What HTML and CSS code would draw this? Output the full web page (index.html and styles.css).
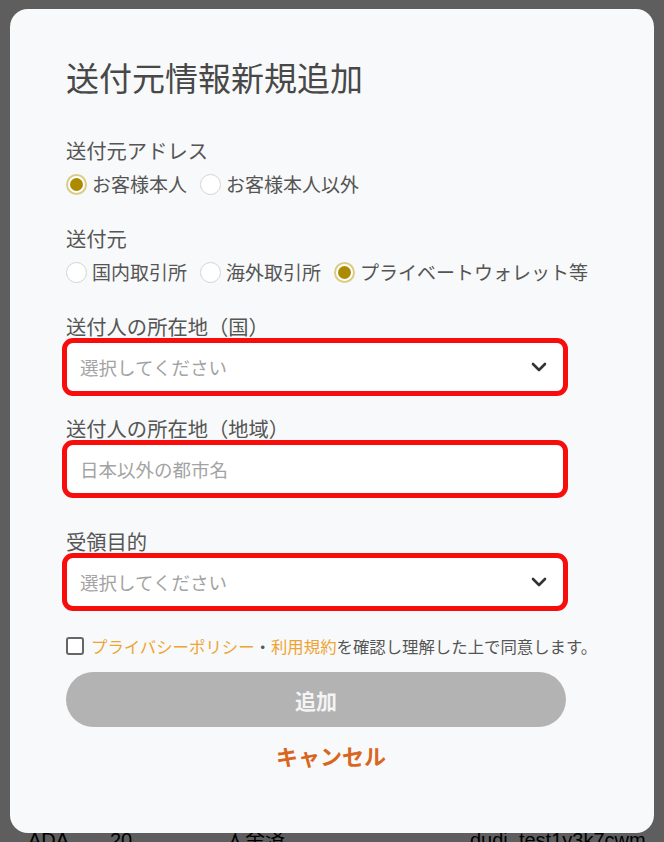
FILE: index.html
```html
<!DOCTYPE html>
<html lang="ja">
<head>
<meta charset="utf-8">
<title>送付元情報新規追加</title>
<link rel="stylesheet" href="styles.css">
</head>
<body>
<div class="page">
  <div class="bg-row">
    <span class="c1">ADA</span><span class="c2">20</span><span class="c3">入金済</span><span class="c4">dudi_test1y3k7cwm</span>
  </div>
</div>
<div class="overlay">
  <div class="modal">
    <h1 class="title">送付元情報新規追加</h1>

    <div class="label first">送付元アドレス</div>
    <div class="radios">
      <label class="radio"><span class="dot on"></span>お客様本人</label>
      <label class="radio"><span class="dot"></span>お客様本人以外</label>
    </div>

    <div class="label gap-l">送付元</div>
    <div class="radios">
      <label class="radio"><span class="dot"></span>国内取引所</label>
      <label class="radio"><span class="dot"></span>海外取引所</label>
      <label class="radio"><span class="dot on"></span>プライベートウォレット等</label>
    </div>

    <div class="label gap-l">送付人の所在地（国）</div>
    <div class="box">
      <span class="ph">選択してください</span>
      <svg class="chev" width="16" height="10" viewBox="0 0 16 10"><path d="M2 2 L8 8 L14 2" fill="none" stroke="#333" stroke-width="2.6" stroke-linecap="round" stroke-linejoin="round"/></svg>
    </div>

    <div class="label gap-m">送付人の所在地（地域）</div>
    <div class="box">
      <span class="ph">日本以外の都市名</span>
    </div>

    <div class="label gap-xl">受領目的</div>
    <div class="box">
      <span class="ph">選択してください</span>
      <svg class="chev" width="16" height="10" viewBox="0 0 16 10"><path d="M2 2 L8 8 L14 2" fill="none" stroke="#333" stroke-width="2.6" stroke-linecap="round" stroke-linejoin="round"/></svg>
    </div>

    <div class="agree">
      <span class="check"></span>
      <span><span class="link">プライバシーポリシー</span>・<span class="link">利用規約</span>を確認し理解した上で同意します。</span>
    </div>

    <div class="btn">追加</div>
    <div class="cancel">キャンセル</div>
  </div>
</div>
</body>
</html>
```
FILE: styles.css
```css
* { box-sizing: border-box; }
html, body { margin: 0; padding: 0; }
body {
  width: 664px;
  height: 842px;
  overflow: hidden;
  background: #ffffff;
  font-family: "Noto Sans CJK JP", "Noto Sans", sans-serif;
  position: relative;
}
.page {
  height: 842px;
  display: flex;
  flex-direction: column;
  justify-content: flex-end;
}
.bg-row {
  display: flex;
  font-family: "Liberation Sans", "Noto Sans CJK JP", sans-serif;
  font-size: 20px;
  line-height: 20px;
  color: #000;
  height: 12px;
  overflow: visible;
  padding-left: 28px;
}
.bg-row .c1 { width: 82px; }
.bg-row .c2 { width: 115px; }
.bg-row .c3 { width: 245px; }
.overlay {
  position: absolute;
  inset: 0;
  background: rgba(0, 0, 0, 0.63);
  padding: 9px 10px 9px 10px;
}
.modal {
  width: 644px;
  height: 824px;
  background: #f8f9fa;
  border-radius: 18px;
  padding: 48px 0 0 56px;
  display: flex;
  flex-direction: column;
  align-items: flex-start;
  color: #555;
}
.title {
  margin: 0;
  font-size: 33px;
  line-height: 40px;
  font-weight: 400;
  color: #484848;
}
.label {
  font-size: 20.3px;
  line-height: 24px;
  color: #555;
}
.label.first { margin-top: 41px; }
.label.gap-l { margin-top: 28px; }
.label.gap-m { margin-top: 20px; }
.label.gap-xl { margin-top: 31px; }
.radios {
  margin-top: 8px;
  display: flex;
  gap: 13px;
}
.radio {
  display: flex;
  align-items: center;
  gap: 5px;
  font-size: 19px;
  line-height: 28px;
  color: #555;
}
.dot {
  width: 21px;
  height: 21px;
  border-radius: 50%;
  border: 1.5px solid #d4d4d4;
  background: #fff;
  position: relative;
}
.dot.on {
  border: 2px solid #d8cc86;
}
.dot.on::after {
  content: "";
  position: absolute;
  inset: 2px;
  border-radius: 50%;
  background: #ad8a00;
}
.box {
  margin-left: -4px;
  width: 506px;
  height: 58px;
  border: 5px solid #f80d0d;
  border-radius: 11px;
  background: #fff;
  display: flex;
  align-items: center;
  justify-content: space-between;
  padding: 0 16px 0 13px;
}
.ph {
  font-size: 18.5px;
  color: #a3a3a3;
}
.agree {
  margin-top: 23px;
  display: flex;
  align-items: center;
  gap: 7px;
  font-size: 16.4px;
  line-height: 24px;
  color: #555;
}
.check {
  width: 18px;
  height: 18px;
  border: 2px solid #666;
  border-radius: 3px;
  background: #fff;
  flex: none;
}
.link { color: #eea432; }
.btn {
  margin-top: 14px;
  width: 500px;
  height: 55px;
  border-radius: 28px;
  background: #b3b3b3;
  color: #f4f4f4;
  font-size: 21px;
  font-weight: 700;
  display: flex;
  align-items: center;
  justify-content: center;
}
.cancel {
  margin-top: 13px;
  width: 500px;
  padding-left: 30px;
  text-align: center;
  font-size: 22px;
  line-height: 30px;
  font-weight: 700;
  color: #d8661e;
}
```
